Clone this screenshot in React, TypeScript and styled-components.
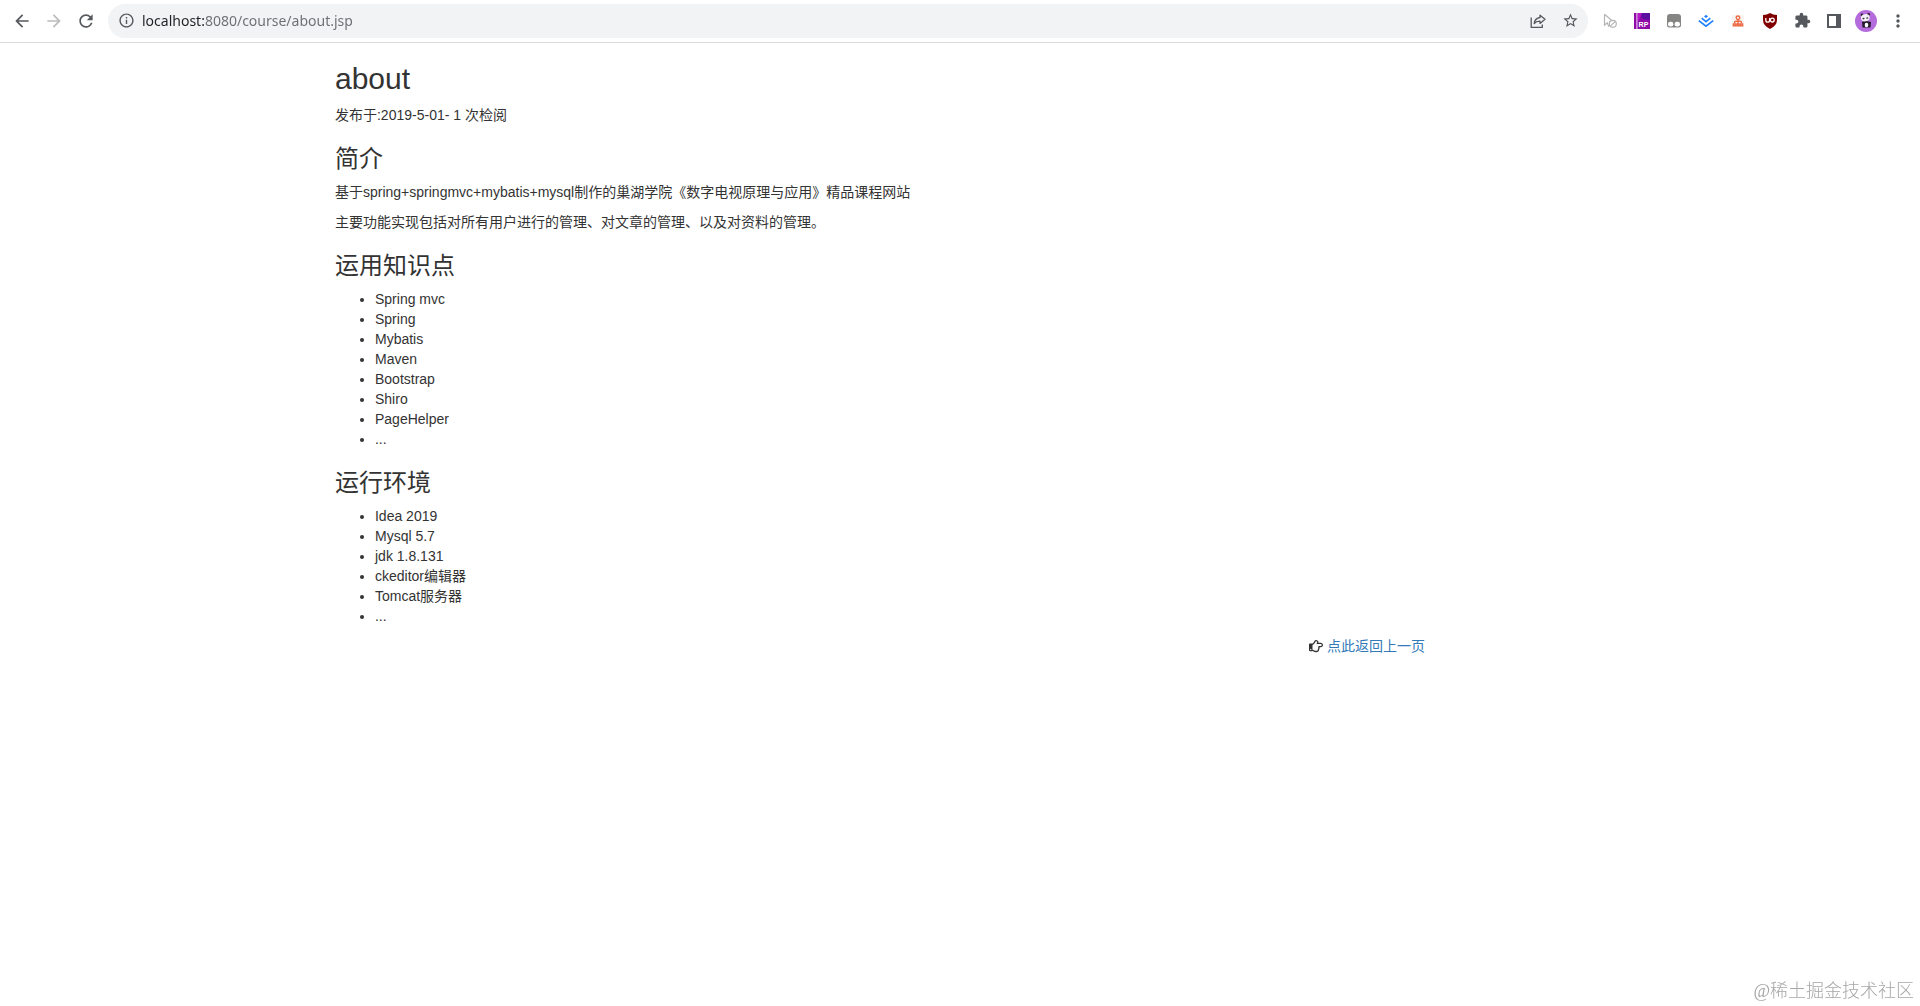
import React, { useState } from "react";
import styled, { createGlobalStyle } from "styled-components";
import {
  MdArrowBack,
  MdArrowForward,
  MdRefresh,
  MdInfoOutline,
  MdStarBorder,
  MdExtension,
  MdMoreVert,
} from "react-icons/md";
import { FaRegHandPointRight } from "react-icons/fa";

const GlobalStyle = createGlobalStyle`
  *, *::before, *::after { box-sizing: border-box; }
  body {
    margin: 0;
    background: #fff;
    color: #333;
    font: 14px/20px "Liberation Sans", "Noto Sans CJK SC", sans-serif;
  }
`;

const Toolbar = styled.header`
  display: flex;
  align-items: center;
  gap: 6px;
  height: 43px;
  padding: 0 6px 1px;
  border-bottom: 1px solid #d8dadd;
`;

const ButtonGroup = styled.nav`
  display: flex;
  flex: none;
`;

const IconButton = styled.button<{ $faded?: boolean }>`
  display: flex;
  align-items: center;
  justify-content: center;
  flex: none;
  width: 32px;
  height: 32px;
  padding: 0;
  border: 0;
  background: none;
  color: ${(p) => (p.$faded ? "#babcbe" : "#55585c")};
  cursor: pointer;
`;

const AddressBar = styled.form`
  display: flex;
  align-items: center;
  flex: 1;
  height: 34px;
  padding: 0 2px;
  border-radius: 17px;
  background: #f1f3f4;
`;

/* The host part is dark, the port and path are grey. */
const UrlInput = styled.input`
  flex: 1;
  min-width: 0;
  height: 24px;
  padding: 0;
  border: 0;
  outline: 0;
  font: 14px/24px "Noto Sans", "Open Sans", sans-serif;
  color: #5f6368;
  background: linear-gradient(90deg, #202124 63px, #6a6e73 63px);
  background-clip: text;
  -webkit-background-clip: text;
  -webkit-text-fill-color: transparent;
`;

const Article = styled.main`
  width: calc(100% * 7 / 12);
  margin-left: calc(100% * 2 / 12);
  padding: 0 15px;
`;

const Title = styled.h1`
  margin: 20px 0 10px;
  font-size: 30px;
  line-height: 32px;
  font-weight: 400;
`;

const SectionTitle = styled.h2`
  margin: 20px 0 10px;
  font-size: 24px;
  line-height: 27px;
  font-weight: 400;
`;

const Paragraph = styled.p`
  margin: 0 0 10px;
`;

const List = styled.ul`
  margin: 0 0 10px;
  padding-left: 40px;
`;

const BackRow = styled.div`
  display: flex;
  align-items: center;
  justify-content: flex-end;
  gap: 4px;
`;

const BackLink = styled.a`
  color: #337ab7;
  text-decoration: none;
`;

const Watermark = styled.div`
  position: fixed;
  right: 6px;
  bottom: 3px;
  color: #a6a6a6;
  font: 300 18px/24px "Liberation Serif", "Noto Sans CJK SC", serif;
`;

const ShareIcon = () => (
  <svg width="16" height="16" viewBox="0 0 16 16" fill="none" stroke="currentColor" strokeWidth="1.3">
    <path d="M1.200 4.500V14.300H12.300V11.500" />
    <path d="M10 2.200 15 6.300 10 10.400V8.100C7.400 8 5.600 8.800 4.200 10.600 4.600 7.300 6.600 4.900 10 4.500Z" strokeLinejoin="round" />
  </svg>
);

const CursorOffIcon = () => (
  <svg width="16" height="16" viewBox="0 0 16 16" fill="none" stroke="#b4b4b4" strokeWidth="1.2">
    <path d="M2.500 1.200V12.200L5.200 9.800 6.900 13.800M2.500 1.200 9.600 7.200" />
    <circle cx="10.800" cy="10.800" r="3.500" />
    <path d="M8.400 13.200 13.200 8.400" />
  </svg>
);

const RpIcon = () => (
  <svg width="16" height="16" viewBox="0 0 16 16">
    <rect width="16" height="16" fill="#8f0ca8" />
    <path d="M4 0H16V7L9 6Z" fill="#5c10a0" />
    <path d="M4 0H8L4 9Z" fill="#b818c8" />
    <rect x="2.300" width="1.200" height="16" fill="#e9b8f0" />
    <text x="4.600" y="14" fontSize="7" fontWeight="700" fontFamily="Liberation Sans, sans-serif" fill="#fff">RP</text>
  </svg>
);

const MaskIcon = () => (
  <svg width="16" height="16" viewBox="0 0 16 16">
    <path d="M4 1H12Q15 1 15 4V12Q15 14.500 12.500 14.500H3.500Q1 14.500 1 12V4Q1 1 4 1Z" fill="#858583" />
    <rect x="2" y="8.800" width="5.400" height="4.800" rx="2.300" fill="#fff" />
    <rect x="8.600" y="8.800" width="5.400" height="4.800" rx="2.300" fill="#fff" />
  </svg>
);

const JuejinIcon = () => (
  <svg width="16" height="16" viewBox="0 0 16 16" fill="none" stroke="#1e80ff" strokeWidth="1.7">
    <path d="M8 1.800 10 3.400 8 5 6 3.400Z" fill="#1e80ff" stroke="none" />
    <path d="M3.700 5.200 8 8.600 12.300 5.200M.8 7.600 8 13.200 15.200 7.600" />
  </svg>
);

const SitemapIcon = () => (
  <svg width="12" height="12" viewBox="0 0 14 14" fill="none" stroke="#ef6a45" strokeWidth="1.6">
    <rect width="14" height="14" fill="#f8f4f2" stroke="none" />
    <circle cx="7" cy="3.200" r="2.100" />
    <path d="M7 5.500V12M3 9.500V8.500Q3 7 7 7T11 8.500V9.500" />
    <path d="M1.600 12.500V10.500H4.100V12.500ZM5.800 12.500V10.500H8.200V12.500ZM9.900 12.500V10.500H12.400V12.500Z" />
  </svg>
);

const ShieldIcon = () => (
  <svg width="16" height="16" viewBox="0 0 16 16">
    <path d="M8 0Q11 2 15 2V7Q15 12.500 8 16 1 12.500 1 7V2Q5 2 8 0Z" fill="#800000" />
    <g fill="none" stroke="#fff" strokeWidth="1.3">
      <path d="M3.800 5V7.300A1.900 1.900 0 0 0 7.600 7.300V5" />
      <circle cx="10.300" cy="7.100" r="1.900" />
    </g>
  </svg>
);

const SidePanelIcon = () => (
  <svg width="14" height="14" viewBox="0 0 14 14">
    <path d="M0 0H14V14H0ZM2 2V12H9V2Z" fill="#55585c" fillRule="evenodd" />
  </svg>
);

const AvatarIcon = () => (
  <svg width="22" height="22" viewBox="0 0 22 22">
    <circle cx="11" cy="11" r="11" fill="#b46bdc" />
    <circle cx="7" cy="5" r="1.400" fill="#2a2030" />
    <circle cx="13.600" cy="4.300" r="1.400" fill="#2a2030" />
    <path d="M7 12Q8 10.500 11 11T16 12L15.500 17.500H7.500Z" fill="#241c2a" />
    <ellipse cx="10.300" cy="7.800" rx="4.400" ry="3.600" fill="#f4eef6" transform="rotate(-10 10.300 7.800)" />
    <ellipse cx="8.500" cy="8.600" rx="1.100" ry=".8" fill="#3a3040" />
    <ellipse cx="12.300" cy="8" rx="1.100" ry=".8" fill="#3a3040" />
    <ellipse cx="11.500" cy="15" rx="1.800" ry="2.200" fill="#fff" />
  </svg>
);

const extensions = [
  { label: "Cursor", icon: <CursorOffIcon /> },
  { label: "Axure RP", icon: <RpIcon /> },
  { label: "Tampermonkey", icon: <MaskIcon /> },
  { label: "Juejin", icon: <JuejinIcon /> },
  { label: "Sitemap", icon: <SitemapIcon /> },
  { label: "uBlock Origin", icon: <ShieldIcon /> },
  { label: "Extensions", icon: <MdExtension size={17} /> },
  { label: "Side panel", icon: <SidePanelIcon /> },
  { label: "Profile", icon: <AvatarIcon /> },
  { label: "Menu", icon: <MdMoreVert size={20} /> },
];

const topics = ["Spring mvc", "Spring", "Mybatis", "Maven", "Bootstrap", "Shiro", "PageHelper", "..."];
const environment = ["Idea 2019", "Mysql 5.7", "jdk 1.8.131", "ckeditor编辑器", "Tomcat服务器", "..."];

function BulletList({ items }: { items: string[] }) {
  return (
    <List>
      {items.map((item) => (
        <li key={item}>{item}</li>
      ))}
    </List>
  );
}

function BrowserToolbar() {
  const [url, setUrl] = useState("localhost:8080/course/about.jsp");
  return (
    <Toolbar>
      <ButtonGroup aria-label="Navigation">
        <IconButton aria-label="Back"><MdArrowBack size={20} /></IconButton>
        <IconButton aria-label="Forward" $faded><MdArrowForward size={20} /></IconButton>
        <IconButton aria-label="Reload"><MdRefresh size={20} /></IconButton>
      </ButtonGroup>
      <AddressBar onSubmit={(e) => e.preventDefault()}>
        <IconButton type="button" aria-label="Site information"><MdInfoOutline size={17} /></IconButton>
        <UrlInput
          aria-label="Address"
          spellCheck={false}
          value={url}
          onChange={(e) => setUrl(e.target.value)}
        />
        <IconButton type="button" aria-label="Share"><ShareIcon /></IconButton>
        <IconButton type="button" aria-label="Bookmark"><MdStarBorder size={17} /></IconButton>
      </AddressBar>
      <ButtonGroup aria-label="Extensions">
        {extensions.map(({ label, icon }) => (
          <IconButton key={label} aria-label={label}>{icon}</IconButton>
        ))}
      </ButtonGroup>
    </Toolbar>
  );
}

export default function App() {
  return (
    <>
      <GlobalStyle />
      <BrowserToolbar />
      <Article lang="zh-CN">
        <Title>about</Title>
        <Paragraph>发布于:2019-5-01- 1 次检阅</Paragraph>
        <SectionTitle>简介</SectionTitle>
        <Paragraph>基于spring+springmvc+mybatis+mysql制作的巢湖学院《数字电视原理与应用》精品课程网站</Paragraph>
        <Paragraph>主要功能实现包括对所有用户进行的管理、对文章的管理、以及对资料的管理。</Paragraph>
        <SectionTitle>运用知识点</SectionTitle>
        <BulletList items={topics} />
        <SectionTitle>运行环境</SectionTitle>
        <BulletList items={environment} />
        <BackRow>
          <FaRegHandPointRight size={14} />
          <BackLink href="#back">点此返回上一页</BackLink>
        </BackRow>
      </Article>
      <Watermark lang="zh-CN">@稀土掘金技术社区</Watermark>
    </>
  );
}
